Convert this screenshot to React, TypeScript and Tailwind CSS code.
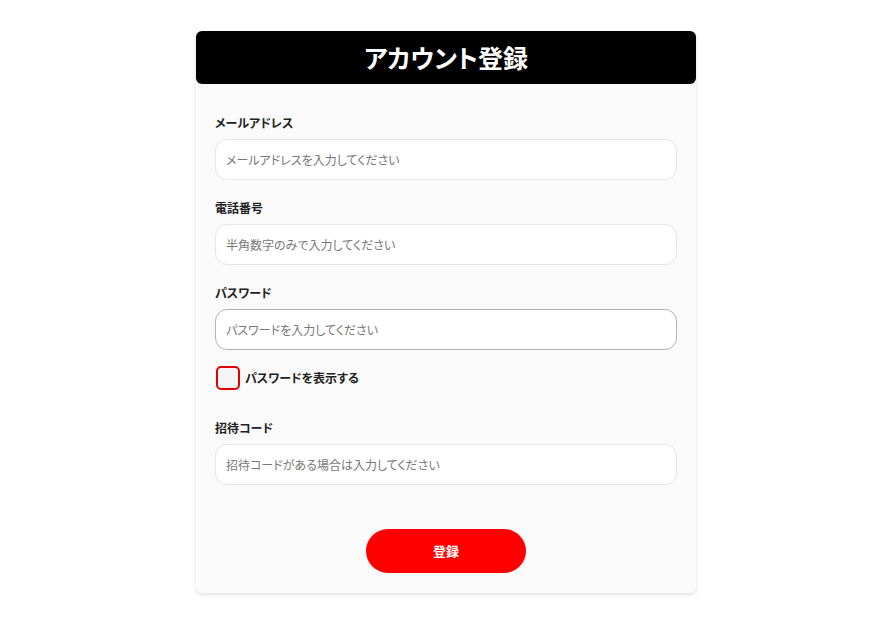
import { useState } from "react";

const font = "[font-family:'Noto_Sans_CJK_JP','Noto_Sans',sans-serif] [font-feature-settings:'palt']";

function Field({ label, placeholder, type = "text", focused = false }: { label: string; placeholder: string; type?: string; focused?: boolean }) {
  return (
    <div className="flex flex-col">
      <label className="text-[12px] font-bold text-[#222] leading-[17px] mb-2">{label}</label>
      <input
        type={type}
        placeholder={placeholder}
        autoFocus={focused}
        className={`h-[41px] w-full rounded-xl bg-white px-[10px] text-[12px] text-[#333] placeholder:text-[#777] outline-none border ${
          focused ? "border-[#b3b3b3]" : "border-[#e6e6e6]"
        }`}
      />
    </div>
  );
}

export default function App() {
  const [show, setShow] = useState(false);

  return (
    <div className={`min-h-screen bg-white pt-[31px] pl-[5px] ${font}`}>
      <div className="mx-auto w-[500px] rounded-md bg-[#fafafa] shadow-[0_2px_4px_rgba(0,0,0,0.12)]">
        <div className="flex h-[53px] items-center justify-center rounded-md bg-black">
          <h1 className="text-[25px] font-bold text-white leading-none">アカウント登録</h1>
        </div>

        <div className="px-[19px] pt-[30px] pb-[20px]">
          <div className="flex flex-col gap-[19px]">
            <Field label="メールアドレス" placeholder="メールアドレスを入力してください" />
            <Field label="電話番号" placeholder="半角数字のみで入力してください" />
            <Field label="パスワード" placeholder="パスワードを入力してください" type={show ? "text" : "password"} focused />
          </div>

          <label className="mt-4 flex items-center gap-[5px] cursor-pointer">
            <input
              type="checkbox"
              checked={show}
              onChange={(e) => setShow(e.target.checked)}
              className="ml-px h-6 w-6 appearance-none rounded-[5px] border-2 border-[#e00000] bg-[#f5f5f5] checked:bg-[#e00000]"
            />
            <span className="text-[12px] font-bold text-[#222]">パスワードを表示する</span>
          </label>

          <div className="mt-[29px]">
            <Field label="招待コード" placeholder="招待コードがある場合は入力してください" />
          </div>

          <div className="mt-[44px] flex justify-center">
            <button className="h-[44px] w-[160px] rounded-full bg-[#ff0000] text-[13px] font-bold text-white">登録</button>
          </div>
        </div>
      </div>
    </div>
  );
}
